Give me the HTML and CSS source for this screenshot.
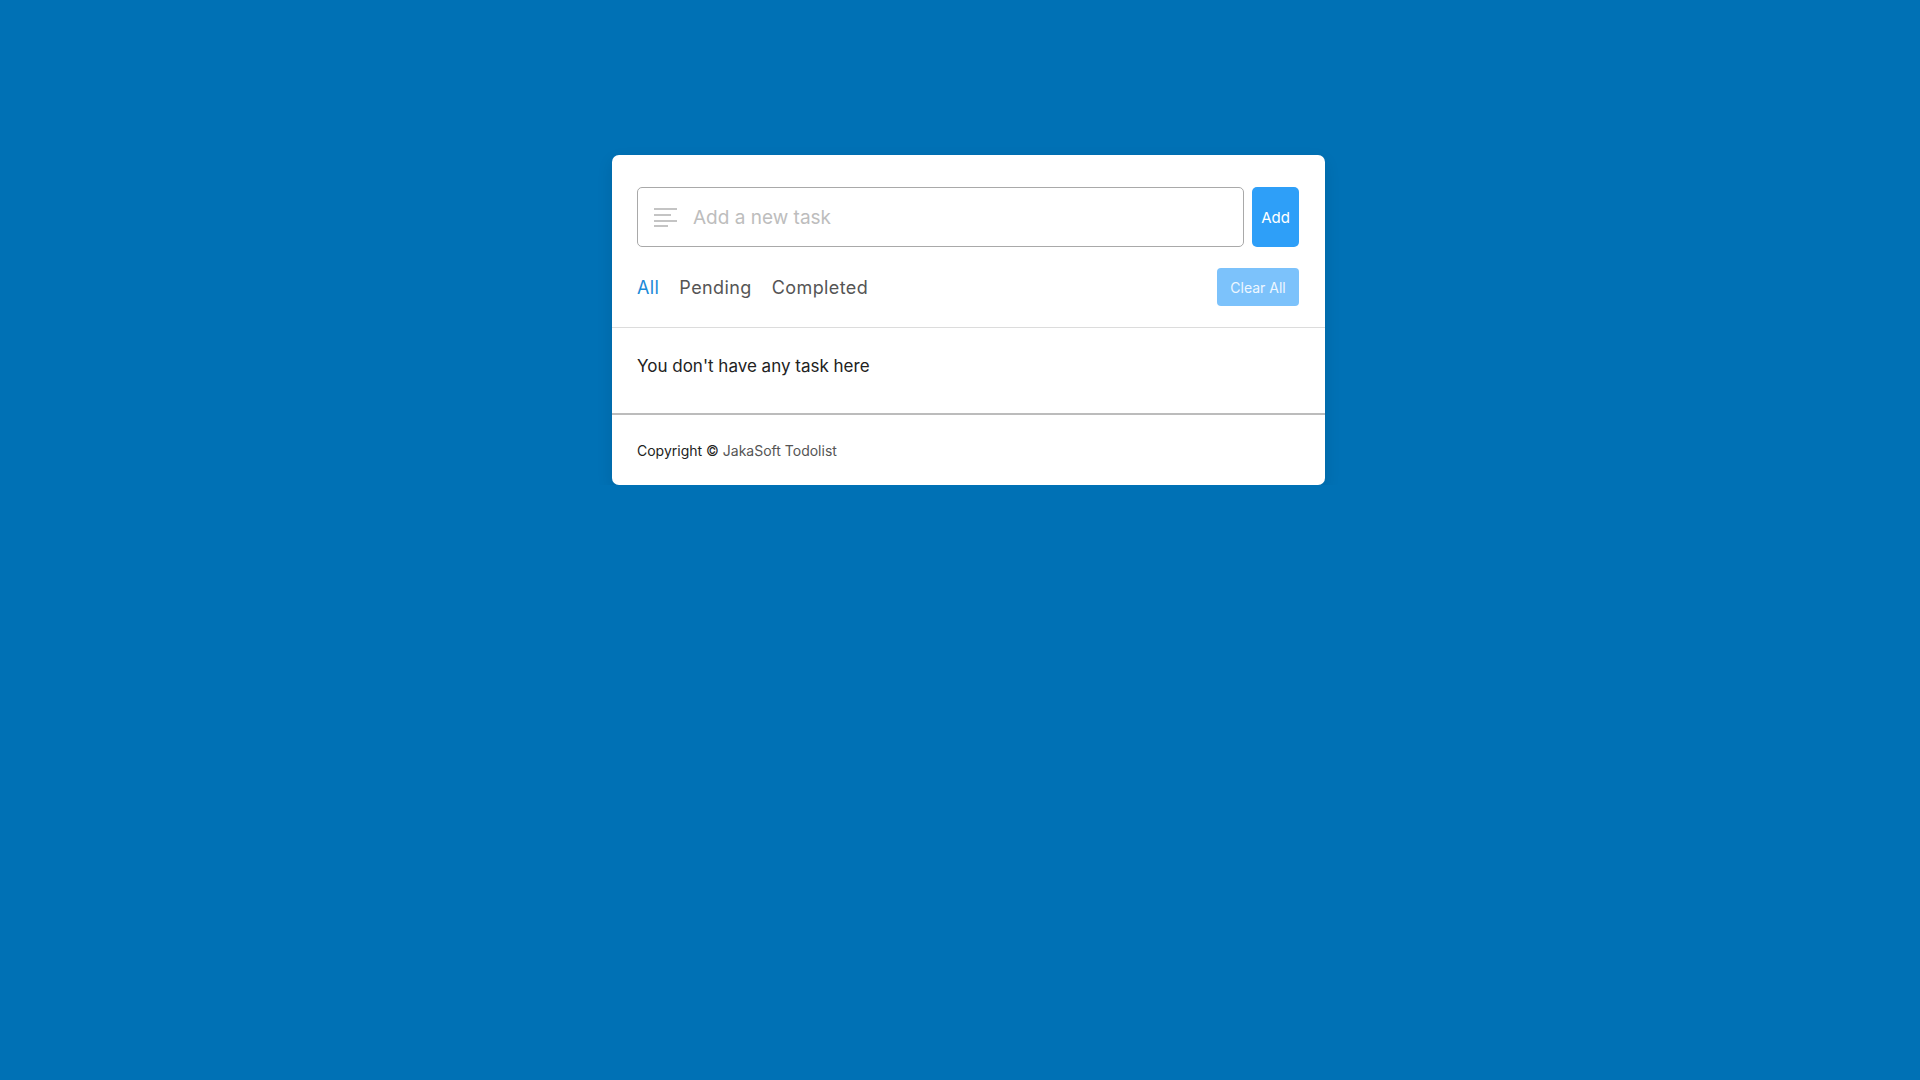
FILE: index.html
```html
<!DOCTYPE html>
<html lang="en">
<head>
    <meta charset="UTF-8">
    <meta name="viewport" content="width=device-width, initial-scale=1.0">
    <title>JakaSoft Todolist</title>
    <link rel="stylesheet" href="styles.css">
</head>
<body>
    <div class="wrapper">
        <div class="todo-card">
            <div class="task-bar">
                <div class="task-input">
                    <svg class="task-icon" width="24" height="20" viewBox="0 0 24 20">
                        <rect x="0" y="1" width="23" height="2" fill="#c4c4c4"/>
                        <rect x="0" y="7" width="17" height="2" fill="#c4c4c4"/>
                        <rect x="0" y="13" width="23" height="2" fill="#c4c4c4"/>
                        <rect x="0" y="18" width="14" height="2" fill="#c4c4c4"/>
                    </svg>
                    <input type="text" placeholder="Add a new task">
                </div>
                <button class="add-btn">Add</button>
            </div>

            <div class="controls">
                <div class="filters">
                    <span class="active">All</span>
                    <span>Pending</span>
                    <span>Completed</span>
                </div>
                <button class="clear-btn">Clear All</button>
            </div>

            <div class="task-box">
                <p class="empty">You don't have any task here</p>
            </div>

            <div class="footer">
                Copyright &copy; <span class="brand">JakaSoft Todolist</span>
            </div>
        </div>
    </div>
</body>
</html>
```

FILE: styles.css
```css
body {
    margin: 0;
    background-color: #0071b5;
    font-family: "Inter", "Open Sans", sans-serif;
}
.wrapper {
    padding: 155px 0 0 17px;
}
.todo-card {
    width: 713px;
    margin: 0 auto;
    background-color: #fff;
    border-radius: 7px;
    box-shadow: 0 6px 16px rgba(0, 0, 0, 0.1);
}
.task-bar {
    display: flex;
    gap: 8px;
    padding: 32px 26px 0 25px;
}
.task-input {
    flex: 1;
    height: 58px;
    display: flex;
    align-items: center;
    border: 1px solid #a9a9a9;
    border-radius: 5px;
}
.task-icon {
    margin-left: 16px;
    margin-right: 13px;
}
.task-input input {
    flex: 1;
    border: none;
    outline: none;
    font-family: inherit;
    font-size: 19px;
    color: #333;
    background: transparent;
}
.task-input input::placeholder {
    color: #bdbdbd;
}
.add-btn {
    width: 47px;
    height: 60px;
    border: none;
    border-radius: 5px;
    background-color: #2e9ff8;
    color: #fff;
    font-family: inherit;
    font-size: 15px;
}
.controls {
    display: flex;
    align-items: center;
    justify-content: space-between;
    padding: 21px 26px 21px 25px;
    border-bottom: 1px solid #dcdcdc;
}
.filters {
    display: flex;
    gap: 20px;
    font-size: 18px;
    letter-spacing: 0.4px;
    color: #555;
}
.filters .active {
    color: #1a8ad8;
}
.clear-btn {
    width: 82px;
    height: 38px;
    border: none;
    border-radius: 4px;
    background-color: #7cc2fb;
    color: #eef7ff;
    font-family: inherit;
    font-size: 14px;
}
.task-box {
    padding: 25px 25px 34px;
    border-bottom: 2px solid #bcbcbc;
}
.empty {
    margin: 0;
    font-size: 17px;
    line-height: 26px;
    color: #222;
}
.footer {
    padding: 27px 25px 25px;
    font-size: 14px;
    line-height: 18px;
    color: #222;
}
.footer .brand {
    color: #555;
}
```
